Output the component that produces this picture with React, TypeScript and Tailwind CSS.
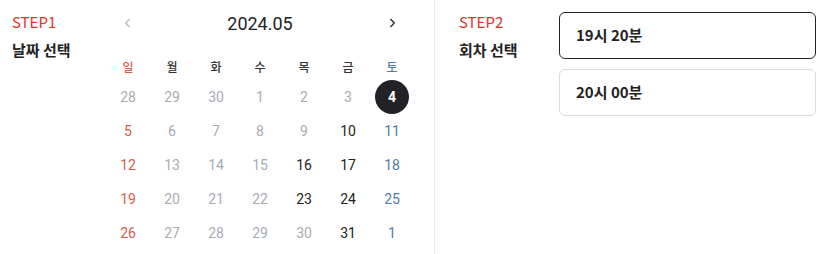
import { useState } from "react";

const weekdays = ["일", "월", "화", "수", "목", "금", "토"];

type Day = { n: number; muted: boolean };

const rows: Day[][] = [
  [28, 29, 30, 1, 2, 3, 4],
  [5, 6, 7, 8, 9, 10, 11],
  [12, 13, 14, 15, 16, 17, 18],
  [19, 20, 21, 22, 23, 24, 25],
  [26, 27, 28, 29, 30, 31, 1],
].map((r, ri) =>
  r.map((n, ci) => ({
    n,
    muted:
      (ri === 0 && ci < 6) ||
      (ri === 1 && ci >= 1 && ci <= 4) ||
      (ri === 2 && ci >= 1 && ci <= 3) ||
      (ri === 3 && ci >= 1 && ci <= 3) ||
      (ri === 4 && ci >= 1 && ci <= 4),
  }))
);

const times = ["19시 20분", "20시 00분"];

const Chevron = ({ dir, className }: { dir: "left" | "right"; className: string }) => (
  <svg width="8" height="10" viewBox="0 0 8 10" className={className} fill="none">
    <path
      d={dir === "left" ? "M5.5 1 L1.8 5 L5.5 9" : "M2.5 1 L6.2 5 L2.5 9"}
      stroke="currentColor"
      strokeWidth="1.3"
    />
  </svg>
);

const App = () => {
  const [selected, setSelected] = useState("0-6");
  const [time, setTime] = useState(0);

  const dayColor = (d: Day, ci: number) => {
    if (d.muted) return "text-[#a7acb4]";
    if (ci === 0) return "text-[#d0604a]";
    if (ci === 6) return "text-[#4f7aab]";
    return "text-[#222]";
  };

  return (
    <div className="flex h-[254px] w-[835px] bg-white font-['Noto_Sans_CJK_KR','Noto_Sans',sans-serif]">
      {/* STEP1 */}
      <section className="flex w-[435px] border-r border-[#ececec] pl-3">
        <div className="w-[94px] pt-[10px]">
          <p className="text-[15px] leading-[24px] text-[#e0352b]">STEP1</p>
          <p className="mt-[4px] text-[15px] font-bold leading-[24px] text-[#222]">날짜 선택</p>
        </div>

        <div className="w-[308px]">
          <div className="flex h-[46px] items-center">
            <button className="flex w-[44px] justify-center">
              <Chevron dir="left" className="text-[#b5b8bd]" />
            </button>
            <div className="flex-1 text-center font-['Roboto',sans-serif] text-[18px] text-[#222]">2024.05</div>
            <button className="flex w-[44px] justify-center">
              <Chevron dir="right" className="text-[#222]" />
            </button>
          </div>

          <div className="mt-2 grid h-[26px] grid-cols-7 items-center text-center text-[12px] font-medium">
            {weekdays.map((w, i) => (
              <span
                key={w}
                className={i === 0 ? "text-[#d0604a]" : i === 6 ? "text-[#4f7aab]" : "text-[#333]"}
              >
                {w}
              </span>
            ))}
          </div>

          {rows.map((r, ri) => (
            <div key={ri} className="grid h-[34px] grid-cols-7 items-center text-center font-['Roboto',sans-serif] text-[14px]">
              {r.map((d, ci) => {
                const key = `${ri}-${ci}`;
                const active = key === selected;
                return (
                  <div key={key} className="flex justify-center">
                    <button
                      onClick={() => !d.muted && setSelected(key)}
                      className={
                        active
                          ? "flex h-[34px] w-[34px] items-center justify-center rounded-full bg-[#222226] font-bold text-white"
                          : `flex h-[34px] w-[34px] items-center justify-center ${dayColor(d, ci)}`
                      }
                    >
                      {d.n}
                    </button>
                  </div>
                );
              })}
            </div>
          ))}
        </div>
      </section>

      {/* STEP2 */}
      <section className="flex flex-1 pl-6 pr-[19px]">
        <div className="w-[100px] pt-[10px]">
          <p className="text-[15px] leading-[24px] text-[#e0352b]">STEP2</p>
          <p className="mt-[4px] text-[15px] font-bold leading-[24px] text-[#222]">회차 선택</p>
        </div>
        <div className="flex flex-1 flex-col gap-[10px] pt-3">
          {times.map((t, i) => (
            <button
              key={t}
              onClick={() => setTime(i)}
              className={`h-[47px] rounded-md border pl-4 text-left text-[15px] font-bold text-[#222] ${
                time === i ? "border-[#222]" : "border-[#dcdcdc]"
              }`}
            >
              {t}
            </button>
          ))}
        </div>
      </section>
    </div>
  );
};

export default App;
